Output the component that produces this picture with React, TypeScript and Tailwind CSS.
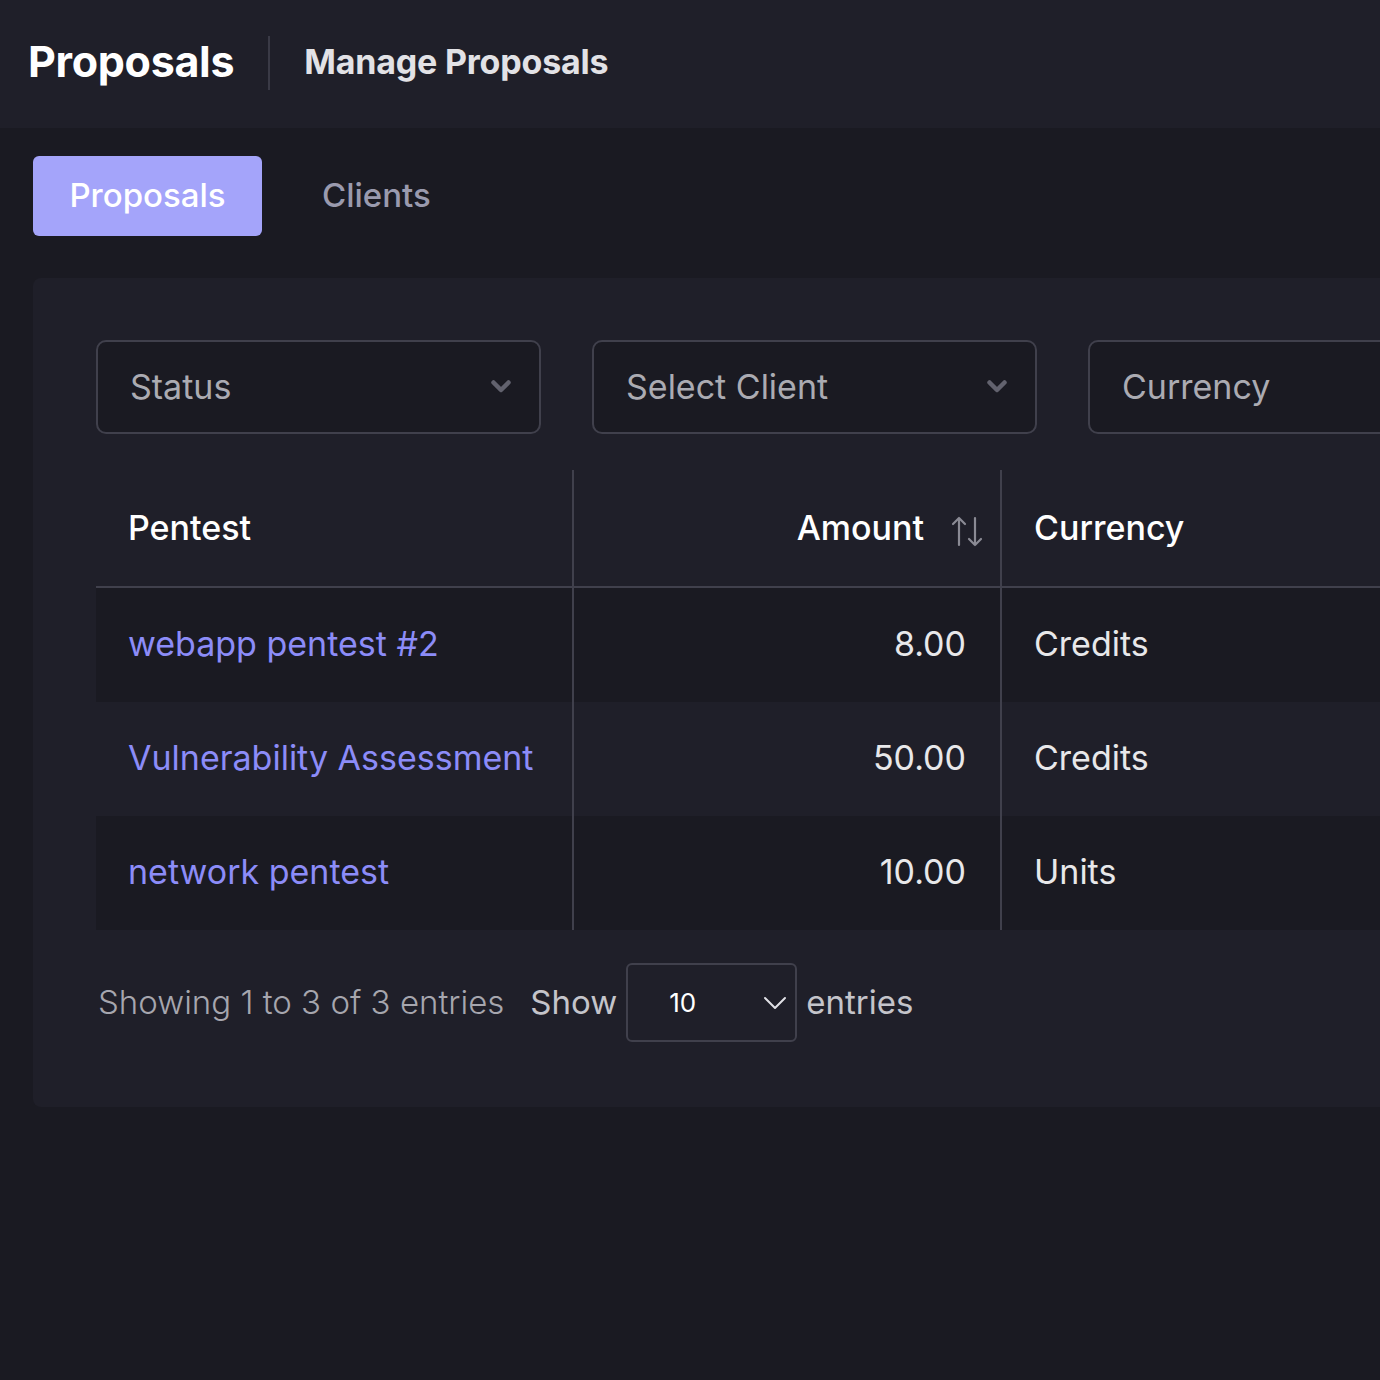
import React from "react";

const font = { fontFamily: "Inter, 'Noto Sans', sans-serif" };

function ChevronBold() {
  return (
    <svg width="22" height="14" viewBox="0 0 22 14" fill="none">
      <path d="M3.5 3.5l7.5 7.5 7.5-7.5" stroke="#62626e" strokeWidth="4.5" strokeLinecap="round" strokeLinejoin="round" />
    </svg>
  );
}

function ChevronThin() {
  return (
    <svg width="24" height="14" viewBox="0 0 24 14" fill="none">
      <path d="M2 2l10 10 10-10" stroke="#e0e0e6" strokeWidth="2" strokeLinecap="round" strokeLinejoin="round" />
    </svg>
  );
}

function SortIcon() {
  return (
    <svg width="34" height="34" viewBox="0 0 34 34" fill="none">
      <path d="M9 31V4M3 10l6-6 6 6" stroke="#8a8a94" strokeWidth="2.2" strokeLinecap="round" strokeLinejoin="round" />
      <path d="M25 4v27M19 25l6 6 6-6" stroke="#8a8a94" strokeWidth="2.2" strokeLinecap="round" strokeLinejoin="round" />
    </svg>
  );
}

const rows = [
  { name: "webapp pentest #2", amount: "8.00", currency: "Credits", bg: "bg-[#1a1a22]" },
  { name: "Vulnerability Assessment", amount: "50.00", currency: "Credits", bg: "bg-[#1f1f29]" },
  { name: "network pentest", amount: "10.00", currency: "Units", bg: "bg-[#1a1a22]" },
];

export default function App() {
  return (
    <div className="w-[1380px] h-[1380px] overflow-hidden bg-[#1a1a22]" style={font}>
      <div className="h-[128px] bg-[#1f1f29] flex items-center pl-[28px] pb-[6px]">
        <span className="text-[43px] font-bold text-white tracking-[-0.3px]">Proposals</span>
        <div className="w-[2px] h-[54px] bg-[#3a3a46] mx-[34px] mt-[4px]" />
        <span className="text-[34px] font-bold text-[#e2e2e6] tracking-[-0.2px]">Manage Proposals</span>
      </div>

      <div className="px-[33px] pt-[28px]">
        <div className="flex items-center">
          <div className="w-[229px] h-[80px] rounded-[6px] bg-[#a4a4fa] flex items-center justify-center text-[33px] font-medium text-white">
            Proposals
          </div>
          <div className="ml-[60px] text-[33px] font-medium text-[#9a9aae]">Clients</div>
        </div>

        <div className="mt-[42px] w-[1500px] rounded-[8px] bg-[#1f1f29] pt-[62px] pl-[63px] pb-[65px]">
          <div className="flex gap-[51px]">
            {["Status", "Select Client", "Currency"].map((t, i) => (
              <div
                key={t}
                className="w-[445px] h-[94px] border-2 border-[#40404c] rounded-[10px] bg-[#1a1a22] flex items-center justify-between pl-[32px] pr-[27px] pb-[2px] text-[34px] text-[#ababb2]"
              >
                <span>{t}</span>
                {i < 2 && <ChevronBold />}
              </div>
            ))}
          </div>

          <div className="mt-[36px]">
            <div className="flex h-[118px] border-b-2 border-[#40404c]">
              <div className="w-[476px] flex items-center pl-[32px] pb-[2px] text-[34px] font-medium text-white">Pentest</div>
              <div className="w-[428px] border-l-2 border-[#40404c] flex items-center justify-end pr-[16px] pb-[2px] text-[34px] font-medium text-white">
                <span>Amount</span>
                <span className="ml-[26px] mt-[8px]">
                  <SortIcon />
                </span>
              </div>
              <div className="flex-1 border-l-2 border-[#40404c] flex items-center pl-[32px] pb-[2px] text-[34px] font-medium text-white">
                Currency
              </div>
            </div>
            {rows.map((r) => (
              <div key={r.name} className={`flex h-[114px] ${r.bg}`}>
                <div className="w-[476px] flex items-center pl-[32px] pb-[3px] text-[34px] text-[#8c8cf8]">{r.name}</div>
                <div className="w-[428px] border-l-2 border-[#40404c] flex items-center justify-end pr-[34px] pb-[3px] text-[34px] text-[#e8e8ea]">
                  {r.amount}
                </div>
                <div className="flex-1 border-l-2 border-[#40404c] flex items-center pl-[32px] pb-[3px] text-[34px] text-[#e8e8ea]">
                  {r.currency}
                </div>
              </div>
            ))}
          </div>

          <div className="mt-[33px] flex items-center text-[33px]">
            <span className="font-light text-[#a6a6ae] ml-[2px]">Showing 1 to 3 of 3 entries</span>
            <span className="ml-[26px] text-[#c4c4ca]">Show</span>
            <div className="ml-[9px] w-[171px] h-[79px] border-2 border-[#40404c] rounded-[6px] flex items-center justify-between pl-[41px] pr-[8px]">
              <span className="text-[26px] text-white">10</span>
              <ChevronThin />
            </div>
            <span className="ml-[9px] text-[#c4c4ca]">entries</span>
          </div>
        </div>
      </div>
    </div>
  );
}
